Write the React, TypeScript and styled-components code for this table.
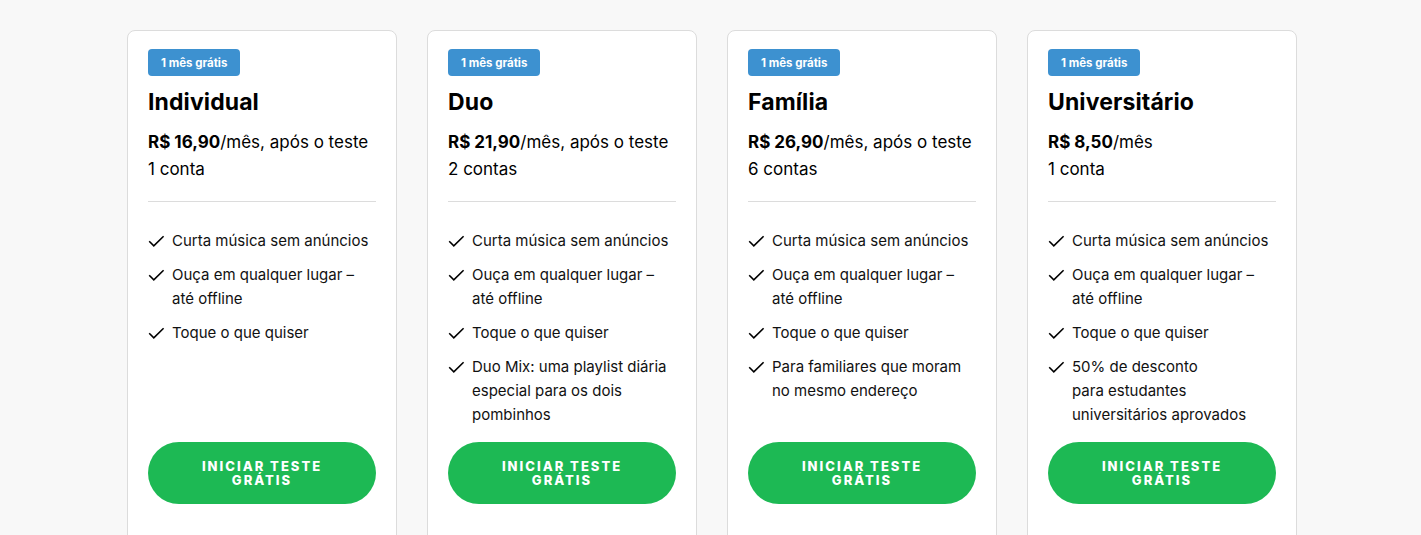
import React from "react";
import styled, { createGlobalStyle } from "styled-components";

const Global = createGlobalStyle`
  html, body { margin: 0; padding: 0; background: #f8f8f8; overflow: hidden; }
  body { font-family: "Inter", "Liberation Sans", sans-serif; color: #000; }
  * { box-sizing: border-box; }
`;

const Page = styled.div`
  display: flex;
  justify-content: flex-start;
  gap: 30px;
  padding: 30px 0 0 127px;
  height: 535px;
`;

const Card = styled.div`
  width: 270px;
  min-height: 540px;
  background: #fff;
  border: 1px solid #dcdcdc;
  border-radius: 8px;
  padding: 18px 20px 40px;
  display: flex;
  flex-direction: column;
`;

const Badge = styled.span`
  align-self: flex-start;
  height: 27px;
  padding: 0 13px;
  display: inline-flex;
  align-items: center;
  background: #3d91d0;
  color: #fff;
  font-size: 11.5px;
  font-weight: 700;
  border-radius: 4px;
`;

const Title = styled.h3`
  margin: 12px 0 0;
  font-size: 23px;
  font-weight: 700;
  line-height: 28px;
  letter-spacing: 0.1px;
`;

const Price = styled.div`
  margin-top: 13px;
  font-size: 17px;
  line-height: 27px;
`;

const Amount = styled.span`
  font-weight: 700;
`;

const Divider = styled.hr`
  border: none;
  border-top: 1px solid #dcdcdc;
  margin: 18px 0 0;
`;

const Features = styled.ul`
  list-style: none;
  margin: 27px 0 0;
  padding: 0;
  display: flex;
  flex-direction: column;
  gap: 10px;
`;

const Feature = styled.li`
  display: flex;
  gap: 7px;
  font-size: 15px;
  line-height: 24px;
  color: #111;
`;

const Check = styled.svg`
  flex: none;
  width: 17px;
  height: 16px;
  margin-top: 4px;
`;

const FeatureText = styled.span`
  white-space: pre-line;
`;

const Button = styled.button`
  margin-top: auto;
  margin-bottom: 25px;
  height: 62px;
  border: none;
  border-radius: 31px;
  background: #1db954;
  color: #fff;
  font-family: "Inter", sans-serif;
  font-weight: 800;
  font-size: 13px;
  line-height: 14px;
  letter-spacing: 2px;
  text-transform: uppercase;
  padding: 0 40px;
`;

const plans = [
  {
    name: "Individual",
    price: "R$ 16,90",
    suffix: "/mês, após o teste",
    accounts: "1 conta",
    features: ["Curta música sem anúncios", "Ouça em qualquer lugar – até offline", "Toque o que quiser"],
  },
  {
    name: "Duo",
    price: "R$ 21,90",
    suffix: "/mês, após o teste",
    accounts: "2 contas",
    features: [
      "Curta música sem anúncios",
      "Ouça em qualquer lugar – até offline",
      "Toque o que quiser",
      "Duo Mix: uma playlist diária especial para os dois pombinhos",
    ],
  },
  {
    name: "Família",
    price: "R$ 26,90",
    suffix: "/mês, após o teste",
    accounts: "6 contas",
    features: [
      "Curta música sem anúncios",
      "Ouça em qualquer lugar – até offline",
      "Toque o que quiser",
      "Para familiares que moram no mesmo endereço",
    ],
  },
  {
    name: "Universitário",
    price: "R$ 8,50",
    suffix: "/mês",
    accounts: "1 conta",
    features: [
      "Curta música sem anúncios",
      "Ouça em qualquer lugar – até offline",
      "Toque o que quiser",
      "50% de desconto\npara estudantes universitários aprovados",
    ],
  },
];

export default function App() {
  return (
    <>
      <Global />
      <Page>
        {plans.map((p) => (
          <Card key={p.name}>
            <Badge>1 mês grátis</Badge>
            <Title>{p.name}</Title>
            <Price>
              <Amount>{p.price}</Amount>
              {p.suffix}
              <br />
              {p.accounts}
            </Price>
            <Divider />
            <Features>
              {p.features.map((f) => (
                <Feature key={f}>
                  <Check viewBox="0 0 17 16">
                    <path d="M1.2 8.3 L5.8 12.8 L15.6 3.2" fill="none" stroke="#000" strokeWidth="1.6" />
                  </Check>
                  <FeatureText>{f}</FeatureText>
                </Feature>
              ))}
            </Features>
            <Button>Iniciar teste grátis</Button>
          </Card>
        ))}
      </Page>
    </>
  );
}
